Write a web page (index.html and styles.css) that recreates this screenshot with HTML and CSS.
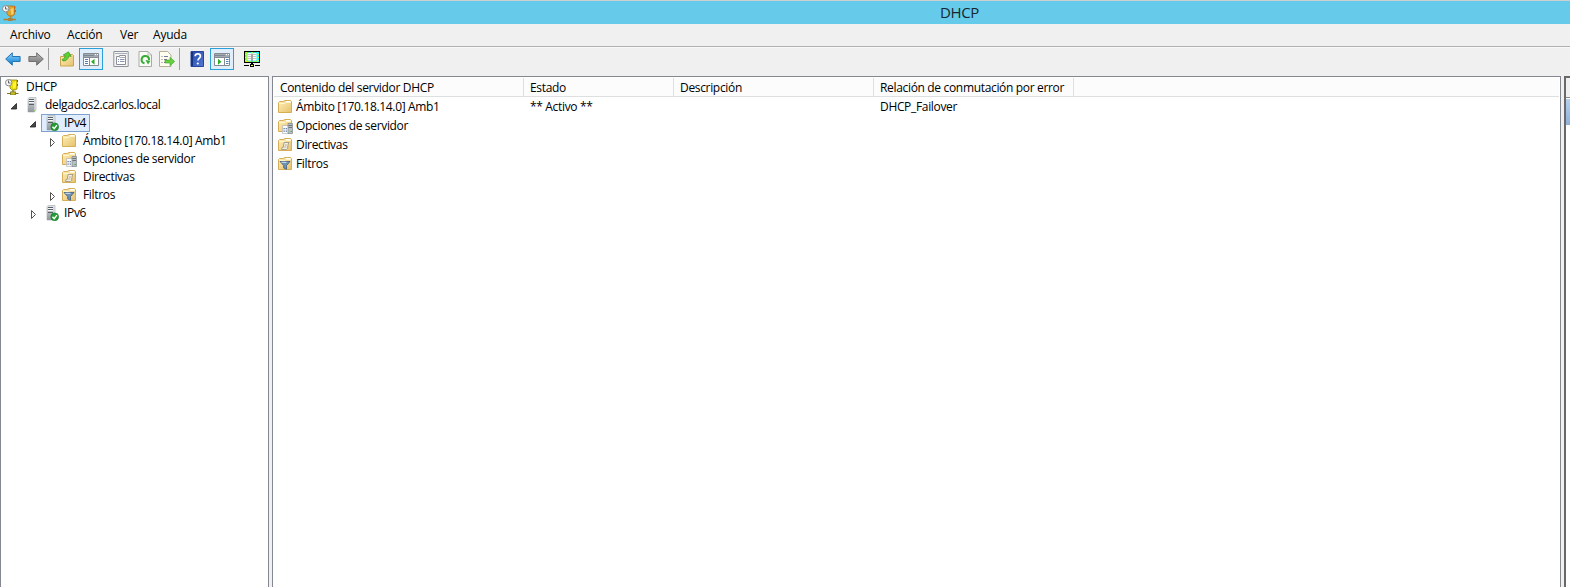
FILE: index.html
```html
<!DOCTYPE html>
<html lang="es">
<head>
<meta charset="utf-8">
<title>DHCP</title>
<link rel="stylesheet" href="styles.css">
</head>
<body>
<svg class="defs" aria-hidden="true">
  <defs>
    <linearGradient id="gold" x1="0" y1="0" x2="1" y2="1"><stop offset="0" stop-color="#fff0b8"/><stop offset="1" stop-color="#e5c16c"/></linearGradient>
    <linearGradient id="blue" x1="0" y1="0" x2="0" y2="1"><stop offset="0" stop-color="#8fd8ff"/><stop offset="1" stop-color="#0878d0"/></linearGradient>
    <linearGradient id="grey" x1="0" y1="0" x2="0" y2="1"><stop offset="0" stop-color="#bcbcbc"/><stop offset="1" stop-color="#6f6f6f"/></linearGradient>
    <linearGradient id="help" x1="0" y1="0" x2="1" y2="1"><stop offset="0" stop-color="#234aa8"/><stop offset="1" stop-color="#5378d6"/></linearGradient>
    <linearGradient id="steel" x1="0" y1="0" x2="0" y2="1"><stop offset="0" stop-color="#d3d7da"/><stop offset="1" stop-color="#8f979c"/></linearGradient>
  </defs>
  <symbol id="app" viewBox="0 0 16 16">
    <path d="M5 1h7.500v8.500l-2 1.500H7l-2-2z" fill="#e2a42c" stroke="#a8741c" stroke-width=".8"/>
    <path d="M12 1.500h1.500v2H12zM12.500 5h1.500v2h-1.500z" fill="#e05a20"/>
    <path d="M8.500 4l3-1v6l-2 1z" fill="#f7cf68"/>
    <path d="M8.500 11v3M1.500 14.500h12.500" stroke="#b5822f" stroke-width="1.300"/>
    <path d="M6 13h4.500v3H6z" fill="#a9823f"/>
    <circle cx="3.700" cy="3.700" r="3.200" fill="#f4f4f4" stroke="#8c8c8c"/>
    <path d="M3.500 1.500v2.500h2" fill="none" stroke="#555" stroke-width=".9"/>
  </symbol>
  <symbol id="dhcp" viewBox="0 0 16 16">
    <path d="M5 1h7v9l-2 1H7l-2-2z" fill="#e9dc10" stroke="#88830c" stroke-width=".8"/>
    <path d="M12 1h1v2h-1zM12 5h1v2h-1z" fill="#e03020"/>
    <path d="M8 4l3-2v6l-3 2z" fill="#fff530"/>
    <path d="M8 11v2M2 14.500h11.500" stroke="#7c7820" stroke-width="1.200"/>
    <path d="M5.500 12.800h5V16h-5z" fill="#c8bc24" stroke="#6d6a20" stroke-width=".7"/>
    <circle cx="3.700" cy="3.700" r="3.200" fill="#f5f5f5" stroke="#888"/>
    <path d="M3.500 1.500v2.500h2" fill="none" stroke="#555" stroke-width=".9"/>
  </symbol>
  <symbol id="server" viewBox="0 0 16 16">
    <path d="M4 1.500L5.500.5H12v12.500l-1.500 2H4z" fill="#e4e7e9" stroke="#a3a9ad" stroke-width=".6"/>
    <path d="M4 1.500h6.500V15H4z" fill="url(#steel)"/>
    <path d="M5 2.500h5M5 4.500h5M5 7.500h5" stroke="#596168"/>
    <path d="M5 3.500h5M5 5.500h5" stroke="#f4f6f7"/>
    <path d="M9 13h1.500v1.300H9z" fill="#76e020"/>
  </symbol>
  <symbol id="serverok" viewBox="0 0 16 16">
    <use href="#server"/>
    <circle cx="11.700" cy="11.800" r="3.900" fill="#249c32" stroke="#147020" stroke-width=".6"/>
    <path d="M9.500 11.700l1.700 1.900 2.700-3.500" fill="none" stroke="#fff" stroke-width="1.400"/>
  </symbol>
  <symbol id="folder" viewBox="0 0 16 16">
    <path d="M1.500 3.500l1-1H6l2-1h5.500l1 1v11h-13z" fill="url(#gold)" stroke="#d6ae58"/>
    <path d="M9 2.500h4.500" stroke="#fff" />
    <path d="M2 4.500h6l1-1h5" fill="none" stroke="#fff5cc"/>
  </symbol>
  <symbol id="options" viewBox="0 0 16 16">
    <use href="#folder"/>
    <path d="M5.500 7.500h6v8h-6z" fill="#fafafa" stroke="#b4b4b4" stroke-width=".7"/>
    <path d="M6.500 10h1.200v1.200H6.500zM8.700 10h1.200v1.200H8.700zM6.500 12.500h1.200v1.200H6.500zM8.700 12.500h1.200v1.200H8.700z" fill="#526a9c"/>
    <path d="M11 5.500h4.600v10H11z" fill="#b9c0c4" stroke="#7c858b" stroke-width=".7"/>
    <path d="M11.500 7.500h3.500M11.500 9.500h3.500" stroke="#566067" stroke-width=".8"/>
    <path d="M13.500 13h1.500v1h-1.500z" fill="#2fbd38"/>
  </symbol>
  <symbol id="policy" viewBox="0 0 16 16">
    <use href="#folder"/>
    <path d="M7 5.500h5l-.8 1.500-.7 4.500-1 1H4.500l.7-2h1z" fill="#f3eee0" stroke="#a39a84" stroke-width=".9"/>
    <path d="M7.800 8h2M7.300 10h2" fill="none" stroke="#a39a84" stroke-width=".8"/>
  </symbol>
  <symbol id="filter" viewBox="0 0 16 16">
    <use href="#folder"/>
    <path d="M3 5.500h10L9.500 9.500v3.800L6.700 12V9.500z" fill="#6f93b5" stroke="#4b6683" stroke-width=".9"/>
    <path d="M4.500 6.300h5" stroke="#d6e5f2"/>
  </symbol>
  <symbol id="open" viewBox="0 0 16 16"><path d="M10.500 6.500V12H5z" fill="#484848" stroke="#222" stroke-width=".8"/></symbol>
  <symbol id="closed" viewBox="0 0 16 16"><path d="M6.500 5.500v8l4-4z" fill="#fff" stroke="#555"/></symbol>
  <symbol id="back" viewBox="0 0 16 16"><path d="M.7 8l6.600-6.200v3.700h7.800v5H7.300v3.700z" fill="url(#blue)" stroke="#2375b2"/></symbol>
  <symbol id="forward" viewBox="0 0 16 16"><path d="M15.300 8L8.700 1.800v3.700H.9v5h7.800v3.700z" fill="url(#grey)" stroke="#707070"/></symbol>
  <symbol id="up" viewBox="0 0 16 16">
    <path d="M1.500 5.500h5l2-2h5l1 1v10.500h-13z" fill="url(#gold)" stroke="#cda552"/>
    <path d="M3 8.500C5 8 6 6.500 6.300 4.800L4.200 4 9.500.8l2.700 4.600-2.300-.4C9 8.500 7 10 4 10z" fill="#5bd32f" stroke="#359522" stroke-width=".7"/>
  </symbol>
  <symbol id="panel" viewBox="0 0 16 16">
    <path d="M.5 2.500h15v12H.5z" fill="#fff" stroke="#858b93"/>
    <path d="M1 3h14v3H1z" fill="#a5abb4"/>
    <path d="M1 4.500h10" stroke="#7d8593"/><path d="M12 3.500h1M14 3.500h1" stroke="#fff"/>
    <path d="M1 6.500h14M6.500 7v7" stroke="#858b93"/>
    <path d="M2 8.500h3M2 10.500h3M2 12.500h3" stroke="#557fac"/>
    <path d="M11.500 7.700v6L8 10.700z" fill="#2cab28"/>
  </symbol>
  <symbol id="actions" viewBox="0 0 16 16">
    <path d="M.5 2.500h15v12H.5z" fill="#fff" stroke="#858b93"/>
    <path d="M1 3h14v3H1z" fill="#a5abb4"/>
    <path d="M1 4.500h10" stroke="#7d8593"/><path d="M12 3.500h1M14 3.500h1" stroke="#fff"/>
    <path d="M1 6.500h14M10.500 7v7" stroke="#858b93"/>
    <path d="M12 8.500h2.500M12 10.500h2.500M12 12.500h2.500" stroke="#557fac"/>
    <path d="M4 7.700v6l3.500-3z" fill="#2cab28"/>
  </symbol>
  <symbol id="props" viewBox="0 0 16 16">
    <path d="M.8.500h14.400v15H.8z" fill="#f4f4f4" stroke="#8f949c"/>
    <path d="M2 2.500h12" stroke="#a9aeb6"/>
    <path d="M3.500 5.500h3v-1h6v9h-9z" fill="#fff" stroke="#8a9099"/>
    <path d="M6.500 6.500h6" stroke="#a9aeb6"/>
    <path d="M5 8.500h1M7 8.500h4.500M5 10.500h1M7 10.500h4.500" stroke="#8693a8"/>
  </symbol>
  <symbol id="refresh" viewBox="0 0 16 16">
    <path d="M2 .5h9l3.500 3.500v11.500H2z" fill="#fbfbf7" stroke="#aaaaa5"/>
    <path d="M11 .5V4h3.500" fill="none" stroke="#aaaaa5" stroke-width=".7"/>
    <path d="M7.500 12.300A3.700 3.700 0 1 1 12 9" fill="none" stroke="#35ad32" stroke-width="2"/>
    <path d="M8.500 9l5 .7-2.500 3.800z" fill="#35ad32"/>
  </symbol>
  <symbol id="export" viewBox="0 0 16 16">
    <path d="M.5.500h8L12 4v11.500H.5z" fill="#fffdf0" stroke="#b6b096"/>
    <path d="M2.500 5.500h1M5 5.500h4M2.500 8.500h1M5 8.500h3M2.500 11.500h1M5 11.500h4" stroke="#77779a"/>
    <path d="M6 9h5V6.300l4.700 4.200-4.700 4.200V12H6z" fill="#69d13e" stroke="#3e9f30" stroke-width=".6"/>
  </symbol>
  <symbol id="question" viewBox="0 0 16 16">
    <path d="M2 .5h12.500v15H2z" fill="url(#help)" stroke="#27459b"/>
    <path d="M2 1h2v14H2z" fill="#173483"/>
    <path d="M6.200 5.200c0-3 5.200-3 5.200 0 0 2-2.500 2.200-2.500 4.300" fill="none" stroke="#fff" stroke-width="1.700"/>
    <circle cx="8.800" cy="12.500" r="1.100" fill="#fff"/>
  </symbol>
  <symbol id="monitor" viewBox="0 0 16 16">
    <path d="M0 0h16v12H0z" fill="#000"/><path d="M1 1h14v10H1z" fill="#ff0"/>
    <path d="M1.500 1v10M14.500 1v10" stroke="#0ff" stroke-dasharray="2 1"/>
    <path d="M3 1.500h4l1 1 1-1h4v8.500H9l-1 1-1-1H3z" fill="#fff" stroke="#0dd" stroke-width=".8"/>
    <path d="M8 3v7" stroke="#222" stroke-width=".8"/>
    <path d="M4 3.500h3M9 3.500h3M4 5.500h3M9 5.500h3M4 7.500h3M9 7.500h3" stroke="#aaa" stroke-width=".7"/>
    <path d="M7 12h2v1H7zM0 14h5v1H0zM11 14h5v1h-5zM6 13h4v3H6z" fill="#000"/><path d="M7 14h2v1H7z" fill="#ff0"/>
  </symbol>
</svg>

<div class="window">
  <header class="titlebar">
    <svg class="icon"><use href="#app"/></svg>
    <h1 class="title">DHCP</h1>
  </header>
  <nav class="menu"><span class="m-archivo">Archivo</span><span class="m-accion">Acción</span><span class="m-ver">Ver</span><span class="m-ayuda">Ayuda</span></nav>
  <div class="toolbar">
    <svg class="icon"><use href="#back"/></svg>
    <svg class="icon forward"><use href="#forward"/></svg>
    <i class="divider"></i>
    <svg class="icon up"><use href="#up"/></svg>
    <span class="toggle"><svg class="icon"><use href="#panel"/></svg></span>
    <svg class="icon props"><use href="#props"/></svg>
    <svg class="icon refresh"><use href="#refresh"/></svg>
    <svg class="icon export"><use href="#export"/></svg>
    <i class="divider"></i>
    <svg class="icon help"><use href="#question"/></svg>
    <span class="toggle toggle-actions"><svg class="icon"><use href="#actions"/></svg></span>
    <svg class="icon monitor"><use href="#monitor"/></svg>
  </div>
  <main class="panes">
    <section class="tree">
      <div class="node root"><svg class="icon"><use href="#dhcp"/></svg><span class="label">DHCP</span></div>
      <div class="node l1"><svg class="icon arrow"><use href="#open"/></svg><svg class="icon"><use href="#server"/></svg><span class="label">delgados2.carlos.local</span></div>
      <div class="node l2"><svg class="icon arrow"><use href="#open"/></svg><span class="selected"><svg class="icon"><use href="#serverok"/></svg><span class="label">IPv4</span></span></div>
      <div class="node l3"><svg class="icon arrow"><use href="#closed"/></svg><svg class="icon"><use href="#folder"/></svg><span class="label">Ámbito [170.18.14.0] Amb1</span></div>
      <div class="node l3"><i class="arrow"></i><svg class="icon"><use href="#options"/></svg><span class="label">Opciones de servidor</span></div>
      <div class="node l3"><i class="arrow"></i><svg class="icon"><use href="#policy"/></svg><span class="label">Directivas</span></div>
      <div class="node l3"><svg class="icon arrow"><use href="#closed"/></svg><svg class="icon"><use href="#filter"/></svg><span class="label">Filtros</span></div>
      <div class="node l2"><svg class="icon arrow"><use href="#closed"/></svg><svg class="icon"><use href="#serverok"/></svg><span class="label">IPv6</span></div>
    </section>
    <section class="list">
      <div class="head"><span class="cell">Contenido del servidor DHCP</span><span class="cell">Estado</span><span class="cell">Descripción</span><span class="cell">Relación de conmutación por error</span></div>
      <div class="row"><span class="name"><svg class="icon"><use href="#folder"/></svg>Ámbito [170.18.14.0] Amb1</span><span class="value">** Activo **</span><span class="value"></span><span class="value">DHCP_Failover</span></div>
      <div class="row"><span class="name"><svg class="icon"><use href="#options"/></svg>Opciones de servidor</span></div>
      <div class="row"><span class="name"><svg class="icon"><use href="#policy"/></svg>Directivas</span></div>
      <div class="row"><span class="name"><svg class="icon"><use href="#filter"/></svg>Filtros</span></div>
    </section>
    <aside class="side"><div class="side-head"></div><div class="side-selected"></div></aside>
  </main>
</div>
</body>
</html>
```
FILE: styles.css
```css
* { box-sizing: border-box; }
body { margin: 0; font: 12px/18px "Open Sans", "Noto Sans", sans-serif; letter-spacing: -0.33px; color: #000; }
.defs { position: absolute; width: 0; height: 0; }
.window { display: flex; flex-direction: column; width: 1570px; height: 587px; overflow: hidden; background: #f0f0f0; white-space: nowrap; }
.icon { width: 16px; height: 16px; flex: none; display: block; }

.titlebar { display: flex; align-items: center; height: 24px; padding-left: 2px; background: #66caea; border-top: 1px solid #cfcfcf; }
.title { margin: 0 0 0 922px; padding-bottom: 2px; font-size: 15px; line-height: 20px; font-weight: 400; letter-spacing: -0.4px; color: #17272d; }

.menu { display: flex; height: 23px; padding: 2px 0 0 10px; border-bottom: 1px solid #b0b0b0; letter-spacing: -0.2px; }
.m-archivo { width: 57px; }
.m-accion { width: 53px; }
.m-ver { width: 33px; }

.toolbar { display: flex; align-items: center; height: 29px; padding: 0 0 6px 5px; border-top: 1px solid #f8f8f8; }
.forward { margin-left: 7px; }
.divider { width: 1px; height: 22px; margin-left: 4px; background: #a0a0a0; }
.up { margin-left: 10px; }
.toggle { display: flex; align-items: center; justify-content: center; width: 24px; height: 22px; margin-left: 4px; background: #dfeefa; border: 1px solid #2b9fda; }
.props { margin-left: 10px; }
.refresh { margin-left: 8px; }
.export { margin-left: 6px; }
.help { margin-left: 9px; }
.toggle-actions { margin-left: 5px; }
.monitor { margin-left: 10px; }

.panes { display: flex; flex: 1; gap: 3px; }
.tree { width: 269px; padding-top: 1px; background: #fff; border: solid #828790; border-width: 1px 1px 0; }
.node { display: flex; align-items: center; height: 18px; }
.root { padding-left: 4px; }
.l1 { padding-left: 5px; }
.l2 { padding-left: 24px; }
.l3 { padding-left: 43px; }
.arrow { width: 16px; margin-right: 2px; flex: none; }
.l3 .arrow { margin-right: 1px; }
.l3 .label { margin-left: 6px; }
.label { margin-left: 5px; }
.selected { display: flex; align-items: center; width: 49px; height: 18px; margin-left: -2px; padding-left: 1px; background: #e0edff; border: 1px solid #7da2ce; }

.list { width: 1289px; padding: 1px 1px 0; background: #fff; border: solid #828790; border-width: 1px 1px 0; }
.head { display: flex; height: 19px; background: #fcfcfc; border-bottom: 1px solid #dedfe1; line-height: 20px; }
.head .cell { width: 200px; height: 18px; padding-left: 6px; border-right: 1px solid #dedfe1; }
.head .cell:nth-child(2) { width: 150px; }
.head .cell:nth-child(1) { width: 250px; }
.row { display: flex; height: 19px; line-height: 19px; }
.name { display: flex; align-items: center; gap: 3px; width: 250px; padding-left: 3px; }
.value { width: 200px; padding-left: 6px; }
.value:nth-child(2) { width: 150px; }

.side { flex: 1; background: #fff; border: solid #696969; border-width: 2px 0 0 2px; }
.side-head { height: 20px; background: #f0f0f0; border-bottom: 1px solid #888; }
.side-selected { height: 26px; margin-top: 1px; background: linear-gradient(#b7d0ed, #8fb0d8); }
```
